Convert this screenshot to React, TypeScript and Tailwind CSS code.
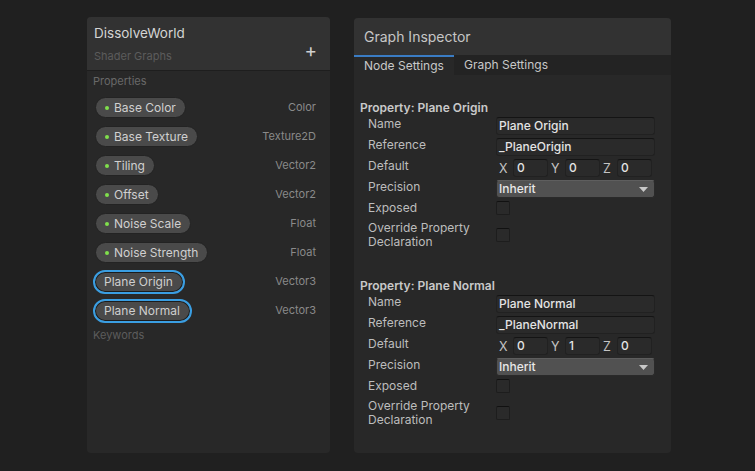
import React from "react";

const font = { fontFamily: "Inter, 'Noto Sans', sans-serif" };

type Prop = { name: string; type: string; selected?: boolean };
const props: Prop[] = [
  { name: "Base Color", type: "Color" },
  { name: "Base Texture", type: "Texture2D" },
  { name: "Tiling", type: "Vector2" },
  { name: "Offset", type: "Vector2" },
  { name: "Noise Scale", type: "Float" },
  { name: "Noise Strength", type: "Float" },
  { name: "Plane Origin", type: "Vector3", selected: true },
  { name: "Plane Normal", type: "Vector3", selected: true },
];

function Pill({ p }: { p: Prop }) {
  if (p.selected) {
    return (
      <div className="h-[24px] flex items-center pl-[9px] pr-[10px] rounded-full border-2 border-[#3a9ee2] bg-[#4a4a4a] shadow-[inset_0_0_0_1px_#1c1c1c] text-[12px] text-[#cfcfcf]">
        {p.name}
      </div>
    );
  }
  return (
    <div className="ml-[2px] h-[21px] flex items-center pl-[9px] pr-[9px] rounded-full border border-[#232323] bg-[#4a4a4a] text-[12px] text-[#d0d0d0]">
      <span className="w-[4px] h-[4px] rounded-full bg-[#80e04c] mr-[5px]" />
      {p.name}
    </div>
  );
}

function TextField({ value, w }: { value: string; w: string }) {
  return (
    <div
      className={`${w} mt-[1px] h-[18px] flex items-center pl-[2px] bg-[#2a2a2a] border border-[#212121] border-t-[#141414] rounded-[3px] text-[12px] font-medium text-[#e4e4e4]`}
    >
      {value}
    </div>
  );
}

function Checkbox() {
  return <div className="w-[14px] h-[14px] bg-[#2a2a2a] border border-[#1d1d1d] border-t-[#111111] rounded-[2px]" />;
}

function Section({ title, name, reference, xyz }: { title: string; name: string; reference: string; xyz: string[] }) {
  const label = "w-[136px] pl-[8px] h-[16px] leading-[16px] text-[12px] text-[#bdbdbd]";
  return (
    <div className="flex flex-col">
      <div className="h-[17px] leading-[17px] text-[12px] font-semibold text-[#c9c9c9]">{title}</div>
      <div className="flex items-start h-[21px]">
        <div className={label}>Name</div>
        <TextField value={name} w="w-[159px]" />
      </div>
      <div className="flex items-start h-[21px]">
        <div className={label}>Reference</div>
        <TextField value={reference} w="w-[159px]" />
      </div>
      <div className="flex items-start h-[21px]">
        <div className={label}>Default</div>
        <div className="flex">
          {["X", "Y", "Z"].map((l, i) => (
            <div key={l} className="flex items-start">
              <div className="w-[17px] pl-[3px] h-[20px] leading-[22px] text-[12.5px] text-[#c4c4c4]">{l}</div>
              <div className="w-[35px] mt-[1px] h-[18px] flex items-center pl-[3px] bg-[#2a2a2a] border border-[#212121] border-t-[#141414] rounded-[3px] text-[12px] font-medium text-[#e4e4e4]">
                {xyz[i]}
              </div>
            </div>
          ))}
        </div>
      </div>
      <div className="flex items-start h-[21px]">
        <div className={label}>Precision</div>
        <div className="w-[159px] mt-[1px] h-[18px] flex items-center justify-between pl-[2px] pr-[6px] bg-[#515151] border border-[#2a2a2a] border-t-[#5e5e5e] rounded-[3px] text-[12px] font-medium text-[#e8e8e8]">
          <span>Inherit</span>
          <svg width="9" height="5" viewBox="0 0 9 5">
            <path d="M0 0 L9 0 L4.5 5 Z" fill="#c8c8c8" />
          </svg>
        </div>
      </div>
      <div className="flex items-start h-[21px]">
        <div className={label}>Exposed</div>
        <div className="mt-[1px]">
          <Checkbox />
        </div>
      </div>
      <div className="flex items-center h-[28px]">
        <div className="w-[136px] pl-[8px] leading-[14px] text-[12px] text-[#bdbdbd]">
          Override Property
          <br />
          Declaration
        </div>
        <Checkbox />
      </div>
    </div>
  );
}

export default function App() {
  return (
    <div className="w-[755px] h-[471px] bg-[#202020] flex pl-[87px] pt-[17px] gap-[24px]" style={font}>
      {/* Left panel */}
      <div className="w-[243px] h-[436px] rounded-[4px] bg-[#282828] flex flex-col overflow-hidden">
        <div className="h-[54px] bg-[#323232] border-b border-[#1e1e1e] flex items-end justify-between pl-[7px] pr-[13px] pb-[6px]">
          <div className="flex flex-col">
            <div className="text-[13.5px] leading-[20px] text-[#d4d4d4]">DissolveWorld</div>
            <div className="mt-[5px] text-[11px] leading-[16px] text-[#5c5c5c]">Shader Graphs</div>
          </div>
          <div className="text-[19px] leading-[20px] text-[#d0d0d0] mb-[3px]">+</div>
        </div>
        <div className="pl-[6px] pr-[14px] pt-[2px] flex flex-col">
          <div className="h-[16px] leading-[16px] text-[11px] text-[#686868]">Properties</div>
          <div className="mt-[4px] flex flex-col">
            {props.map((p) => (
              <div key={p.name} className="h-[29px] flex items-center justify-between">
                <Pill p={p} />
                <div className="text-[11px] text-[#8a8a8a]">{p.type}</div>
              </div>
            ))}
          </div>
          <div className="mt-[2px] h-[16px] leading-[16px] text-[11px] text-[#5c5c5c]">Keywords</div>
        </div>
      </div>

      {/* Right panel */}
      <div className="mt-[1px] w-[317px] h-[435px] rounded-[4px] bg-[#282828] flex flex-col overflow-hidden">
        <div className="h-[37px] bg-[#323232] flex items-center pl-[10px] text-[14px] text-[#c6c6c6]">Graph Inspector</div>
        <div className="h-[20px] flex bg-[#232323]">
          <div className="w-[100px] bg-[#282828] border-t-2 border-[#3a7cc4] flex items-center pl-[10px] text-[12px] text-[#c8c8c8]">
            Node Settings
          </div>
          <div className="flex items-center pl-[10px] text-[12px] text-[#c8c8c8]">Graph Settings</div>
        </div>
        <div className="pl-[6px] pt-[24px] flex flex-col">
          <Section title="Property: Plane Origin" name="Plane Origin" reference="_PlaneOrigin" xyz={["0", "0", "0"]} />
          <div className="mt-[28px]">
            <Section title="Property: Plane Normal" name="Plane Normal" reference="_PlaneNormal" xyz={["0", "1", "0"]} />
          </div>
        </div>
      </div>
    </div>
  );
}
